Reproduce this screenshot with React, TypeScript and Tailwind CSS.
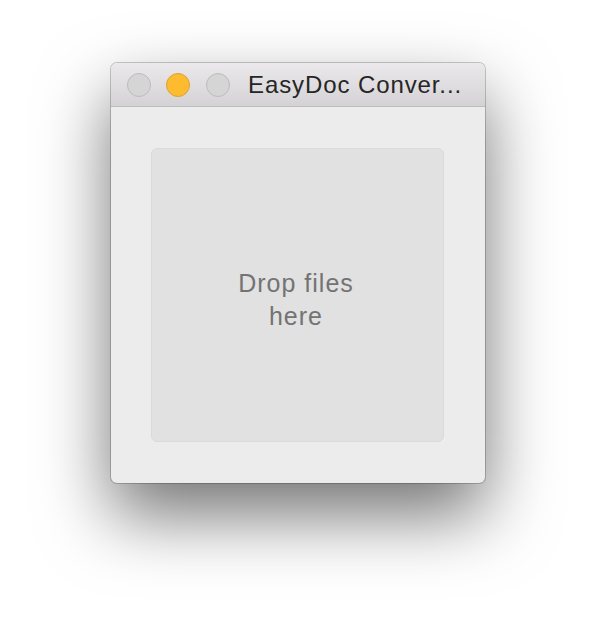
export default function App() {
  return (
    <div className="w-[596px] h-[643px] bg-white pl-[111px] pt-[63px]" style={{ fontFamily: '"Liberation Sans", Arial, sans-serif' }}>
      <div className="w-[374px] h-[420px] rounded-[6px] overflow-hidden flex flex-col bg-[#ececec] shadow-[0_32px_70px_rgba(0,0,0,0.55),0_0_0_1px_rgba(0,0,0,0.2)]">
        <div className="h-[44px] shrink-0 flex items-center bg-gradient-to-b from-[#ebe9eb] to-[#d4d2d4] border-b border-[#bdbdbd] pl-[16px]">
          <div className="w-[24px] h-[24px] rounded-full bg-[#d6d5d6] border border-[#bdbcbd]" />
          <div className="w-[24px] h-[24px] rounded-full bg-[#fdbc30] border border-[#dea134] ml-[15px]" />
          <div className="w-[24px] h-[24px] rounded-full bg-[#d6d5d6] border border-[#bdbcbd] ml-[16px]" />
          <div className="ml-[18px] text-[24px] text-[#262626] whitespace-nowrap tracking-[0.9px]">EasyDoc Conver...</div>
        </div>
        <div className="flex-1 p-[41px] pl-[40px]">
          <div className="w-full h-full rounded-[6px] bg-[#e1e1e1] border border-[#dadada] flex items-center justify-center">
            <div className="text-center text-[25px] leading-[33px] text-[#737373] tracking-[1px] pt-[9px] pr-[3px]">
              Drop files
              <br />
              here
            </div>
          </div>
        </div>
      </div>
    </div>
  );
}
